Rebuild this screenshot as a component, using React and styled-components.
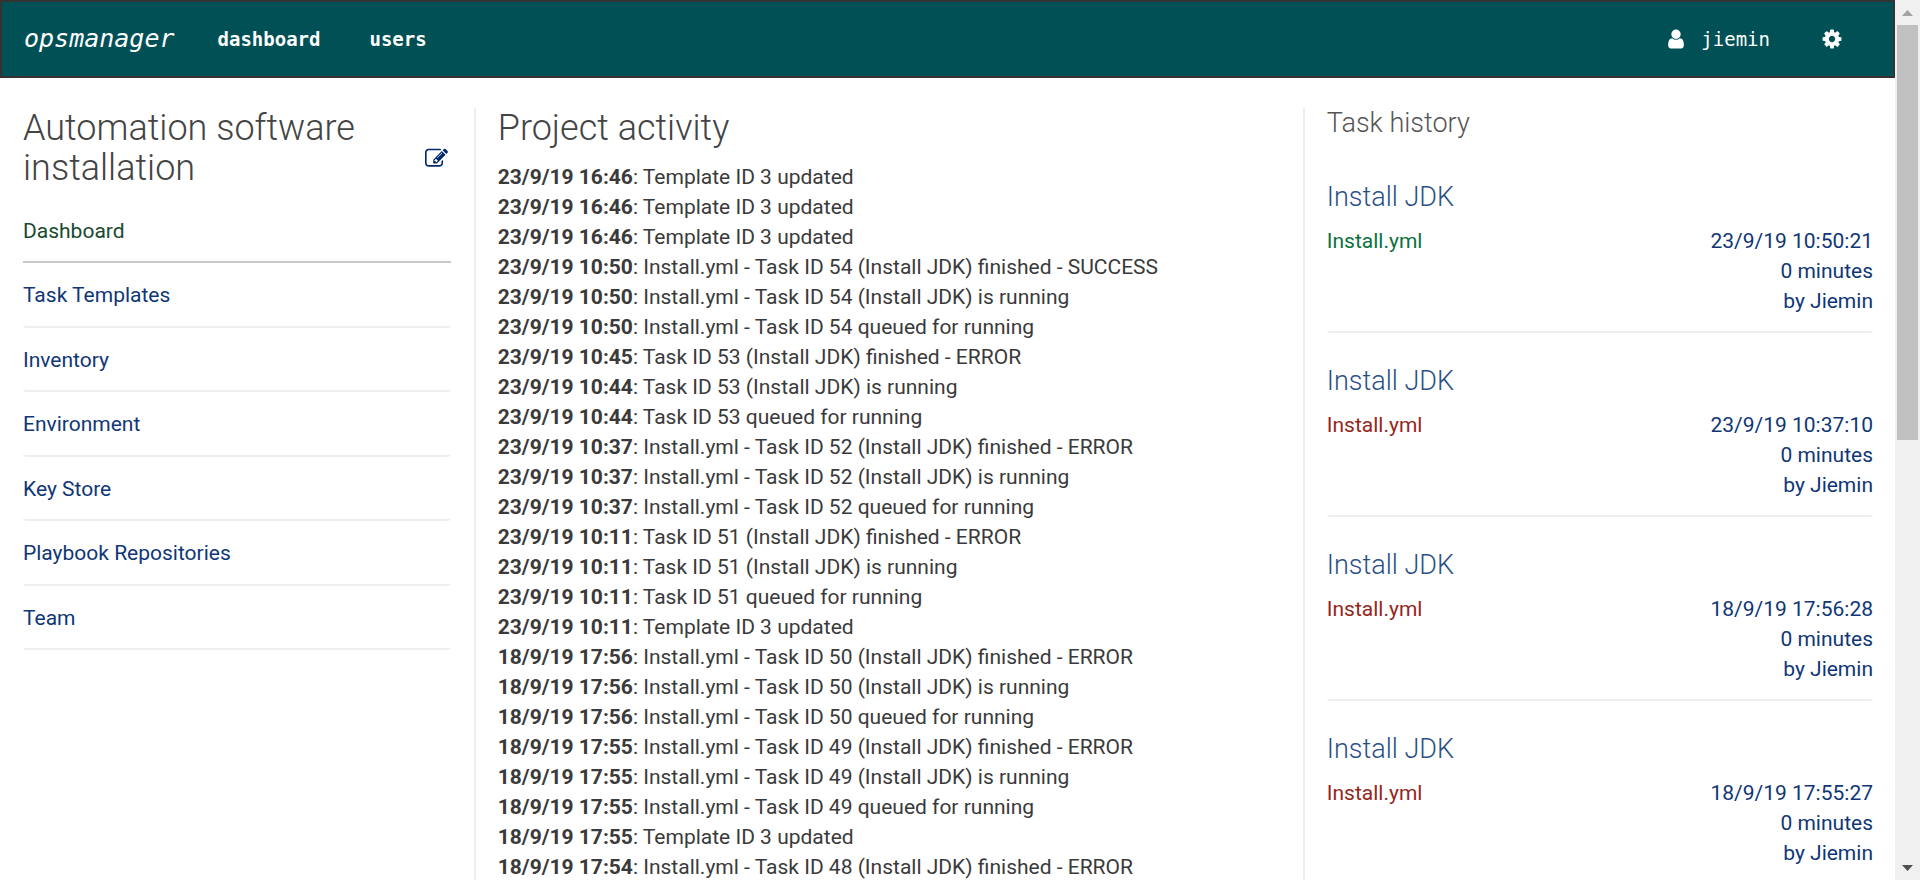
import React from "react";
import styled, { createGlobalStyle } from "styled-components";

const GlobalStyle = createGlobalStyle`
  *, *::before, *::after { box-sizing: border-box; }
  body {
    margin: 0;
    background: #fff;
    color: #3a3a3a;
    font-family: Roboto, "Liberation Sans", sans-serif;
    font-size: 21px;
    font-weight: 400;
    line-height: 30px;
  }
  h1, h2, h3, p, ul { margin: 0; padding: 0; }
  h1, h2, h3 { font-weight: 300; }
  ul { list-style: none; }
  a { color: #0f3776; text-decoration: none; }
  button { border: 0; padding: 0; background: none; cursor: pointer; display: flex; }
`;

const Window = styled.div`
  display: flex;
  height: 100vh;
  overflow: hidden;
`;

const Page = styled.div`
  flex: 1;
  min-width: 0;
  display: flex;
  flex-direction: column;
`;

const Navbar = styled.header`
  flex: none;
  display: flex;
  align-items: center;
  height: 78px;
  padding: 0 50px 0 22px;
  border: 2px solid #333;
  background: #005056;
  font-family: "DejaVu Sans Mono", "Liberation Mono", monospace;
  font-size: 19px;
`;

const Brand = styled.a`
  margin-right: 43px;
  color: #fff;
  font-size: 25px;
  font-style: italic;
`;

const NavMenu = styled.nav`
  flex: 1;
  display: flex;
  gap: 49px;
`;

const NavLink = styled.a`
  color: #fff;
  font-weight: bold;
`;

const UserLink = styled.a`
  display: flex;
  align-items: center;
  gap: 14px;
  margin-right: 51px;
  color: #fff;
`;

const Columns = styled.main`
  flex: 1;
  min-height: 0;
  display: grid;
  grid-template-columns: minmax(0, 4fr) minmax(0, 7fr) minmax(0, 5fr);
  margin-top: 30px;
`;

const Column = styled.section`
  min-width: 0;
  padding: 0 ${(p) => (p.$divided ? "22px" : "23px")};
  border-left: ${(p) => (p.$divided ? "2px solid #eee" : "0")};
`;

const ProjectHeader = styled.div`
  display: flex;
  justify-content: space-between;
  align-items: flex-end;
  gap: 23px;
  margin-bottom: 13px;
  padding-right: 3px;

  button { margin-bottom: 18px; color: #002a6c; }
`;

const Title = styled.h1`
  color: #444;
  font-size: 36px;
  line-height: 40px;
`;

const Subtitle = styled.h2`
  margin-bottom: 11px;
  color: #555;
  font-size: 27px;
`;

const SideList = styled.ul`
  display: grid;
  gap: 2px;
`;

const SideItem = styled.li`
  padding: 15px 0;
  border-bottom: 2px solid ${(p) => (p.$active ? "#c8c8c8" : "#eee")};
  border-radius: ${(p) => (p.$active ? 0 : "4px")};
  line-height: 31px;

  a { display: block; color: ${(p) => (p.$active ? "#184a2d" : "#0f3776")}; }

  &:nth-child(odd) { line-height: 30px; }
`;

const ActivityList = styled.ul`
  margin-top: 14px;
  white-space: nowrap;
`;

const TaskCard = styled.li`
  padding: 33px 0 15px;
  border-bottom: 2px solid #eee;
  border-radius: 4px;
`;

const TaskLink = styled.a`
  display: block;
`;

const TaskTitle = styled.h3`
  margin-bottom: 14px;
  color: #2c4f88;
  font-size: 27px;
`;

const TaskBody = styled.div`
  display: flex;
  justify-content: space-between;
`;

const Playbook = styled.span`
  color: ${(p) => (p.$ok ? "#0b713d" : "#96261c")};
`;

const TaskMeta = styled.div`
  text-align: right;
`;

const ScrollTrack = styled.div`
  flex: none;
  display: flex;
  flex-direction: column;
  width: 25px;
  padding: 0 2px;
  background: #f0f0f0;

  button { flex: none; height: 25px; align-items: center; justify-content: center; }
`;

const ScrollRail = styled.div`
  flex: 1;
`;

const ScrollThumb = styled.div`
  height: 50%;
  background: #c1c1c1;
`;

const iconPaths = {
  user: "M1536 1399q0 109-62.5 187t-150.5 78h-854q-88 0-150.5-78t-62.5-187q0-85 8.5-160.5t31.5-152 58.5-131 94-89 134.5-34.5q131 128 313 128t313-128q76 0 134.5 34.5t94 89 58.5 131 31.5 152 8.5 160.5zm-256-887q0 159-112.5 271.5t-271.5 112.5-271.5-112.5-112.5-271.5 112.5-271.5 271.5-112.5 271.5 112.5 112.5 271.5z",
  cog: "M1152 896q0-106-75-181t-181-75-181 75-75 181 75 181 181 75 181-75 75-181zm512-109v222q0 12-8 23t-20 13l-185 28q-19 54-39 91 35 50 107 138 10 12 10 25t-9 23q-27 37-99 108t-94 71q-12 0-26-9l-138-108q-44 23-91 38-16 136-29 186-7 28-36 28h-222q-14 0-24.5-8.5t-11.5-21.5l-28-184q-49-16-90-37l-141 107q-10 9-25 9-14 0-25-11-126-114-165-168-7-10-7-23 0-12 8-23 15-21 51-66.5t54-70.5q-27-50-41-99l-183-27q-13-2-21-12.5t-8-23.5v-222q0-12 8-23t19-13l186-28q14-46 39-92-40-57-107-138-10-12-10-24 0-10 9-23 26-36 98.5-107.5t94.5-71.5q13 0 26 10l138 107q44-23 91-38 16-136 29-186 7-28 36-28h222q14 0 24.5 8.5t11.5 21.5l28 184q49 16 90 37l142-107q9-9 24-9 13 0 25 10 129 119 165 170 7 8 7 22 0 12-8 23-15 21-51 66.5t-54 70.5q26 50 41 98l183 28q13 2 21 12.5t8 23.5z",
  edit: "M888 1184l116-116-152-152-116 116v56h96v96h56zm440-720q-16-16-33 1l-350 350q-17 17-1 33t33-1l350-350q17-17 1-33zm80 594v190q0 119-84.5 203.5t-203.5 84.5h-832q-119 0-203.5-84.5t-84.5-203.5v-832q0-119 84.5-203.5t203.5-84.5h832q63 0 117 25 15 7 18 23 3 17-9 29l-49 49q-14 14-32 8-23-6-45-6h-832q-66 0-113 47t-47 113v832q0 66 47 113t113 47h832q66 0 113-47t47-113v-126q0-13 9-22l64-64q15-15 35-7t20 29zm-96-738l288 288-672 672h-288v-288zm444 132l-92 92-288-288 92-92q28-28 68-28t68 28l152 152q28 28 28 68t-28 68z",
};

const Icon = ({ name, size }) => (
  <svg width={size} height={size} viewBox="0 0 1792 1792" fill="currentColor" aria-hidden="true">
    <path d={iconPaths[name]} />
  </svg>
);

const SettingsButton = styled.button`
  color: #fff;
`;

const menu = [
  "Dashboard",
  "Task Templates",
  "Inventory",
  "Environment",
  "Key Store",
  "Playbook Repositories",
  "Team",
];

const activity = [
  ["23/9/19 16:46", "Template ID 3 updated"],
  ["23/9/19 16:46", "Template ID 3 updated"],
  ["23/9/19 16:46", "Template ID 3 updated"],
  ["23/9/19 10:50", "Install.yml - Task ID 54 (Install JDK) finished - SUCCESS"],
  ["23/9/19 10:50", "Install.yml - Task ID 54 (Install JDK) is running"],
  ["23/9/19 10:50", "Install.yml - Task ID 54 queued for running"],
  ["23/9/19 10:45", "Task ID 53 (Install JDK) finished - ERROR"],
  ["23/9/19 10:44", "Task ID 53 (Install JDK) is running"],
  ["23/9/19 10:44", "Task ID 53 queued for running"],
  ["23/9/19 10:37", "Install.yml - Task ID 52 (Install JDK) finished - ERROR"],
  ["23/9/19 10:37", "Install.yml - Task ID 52 (Install JDK) is running"],
  ["23/9/19 10:37", "Install.yml - Task ID 52 queued for running"],
  ["23/9/19 10:11", "Task ID 51 (Install JDK) finished - ERROR"],
  ["23/9/19 10:11", "Task ID 51 (Install JDK) is running"],
  ["23/9/19 10:11", "Task ID 51 queued for running"],
  ["23/9/19 10:11", "Template ID 3 updated"],
  ["18/9/19 17:56", "Install.yml - Task ID 50 (Install JDK) finished - ERROR"],
  ["18/9/19 17:56", "Install.yml - Task ID 50 (Install JDK) is running"],
  ["18/9/19 17:56", "Install.yml - Task ID 50 queued for running"],
  ["18/9/19 17:55", "Install.yml - Task ID 49 (Install JDK) finished - ERROR"],
  ["18/9/19 17:55", "Install.yml - Task ID 49 (Install JDK) is running"],
  ["18/9/19 17:55", "Install.yml - Task ID 49 queued for running"],
  ["18/9/19 17:55", "Template ID 3 updated"],
  ["18/9/19 17:54", "Install.yml - Task ID 48 (Install JDK) finished - ERROR"],
];

const tasks = [
  { time: "23/9/19 10:50:21", ok: true },
  { time: "23/9/19 10:37:10", ok: false },
  { time: "18/9/19 17:56:28", ok: false },
  { time: "18/9/19 17:55:27", ok: false },
];

export default function App() {
  return (
    <Window>
      <GlobalStyle />
      <Page>
        <Navbar>
          <Brand href="#">opsmanager</Brand>
          <NavMenu>
            <NavLink href="#dashboard">dashboard</NavLink>
            <NavLink href="#users">users</NavLink>
          </NavMenu>
          <UserLink href="#account">
            <Icon name="user" size={22} />
            jiemin
          </UserLink>
          <SettingsButton type="button" aria-label="Settings">
            <Icon name="cog" size={22} />
          </SettingsButton>
        </Navbar>
        <Columns>
          <Column>
            <ProjectHeader>
              <Title>Automation software installation</Title>
              <button type="button" aria-label="Edit project">
                <Icon name="edit" size={23} />
              </button>
            </ProjectHeader>
            <SideList>
              {menu.map((label, i) => (
                <SideItem key={label} $active={i === 0}>
                  <a href="#menu">{label}</a>
                </SideItem>
              ))}
            </SideList>
          </Column>
          <Column $divided>
            <Title as="h2">Project activity</Title>
            <ActivityList>
              {activity.map(([when, what], i) => (
                <li key={i}>
                  <strong>{when}</strong>: {what}
                </li>
              ))}
            </ActivityList>
          </Column>
          <Column $divided>
            <Subtitle>Task history</Subtitle>
            <ul>
              {tasks.map((task) => (
                <TaskCard key={task.time}>
                  <TaskLink href="#task">
                    <TaskTitle>Install JDK</TaskTitle>
                    <TaskBody>
                      <Playbook $ok={task.ok}>Install.yml</Playbook>
                      <TaskMeta>
                        <p>{task.time}</p>
                        <p>0 minutes</p>
                        <p>by Jiemin</p>
                      </TaskMeta>
                    </TaskBody>
                  </TaskLink>
                </TaskCard>
              ))}
            </ul>
          </Column>
        </Columns>
      </Page>
      <ScrollTrack>
        <button type="button" aria-label="Scroll up">
          <svg width="11" height="6" viewBox="0 0 11 6" fill="#a3a3a3"><path d="M0 6L5.500 0L11 6z" /></svg>
        </button>
        <ScrollRail>
          <ScrollThumb />
        </ScrollRail>
        <button type="button" aria-label="Scroll down">
          <svg width="11" height="6" viewBox="0 0 11 6" fill="#505050"><path d="M0 0L5.500 6L11 0z" /></svg>
        </button>
      </ScrollTrack>
    </Window>
  );
}
